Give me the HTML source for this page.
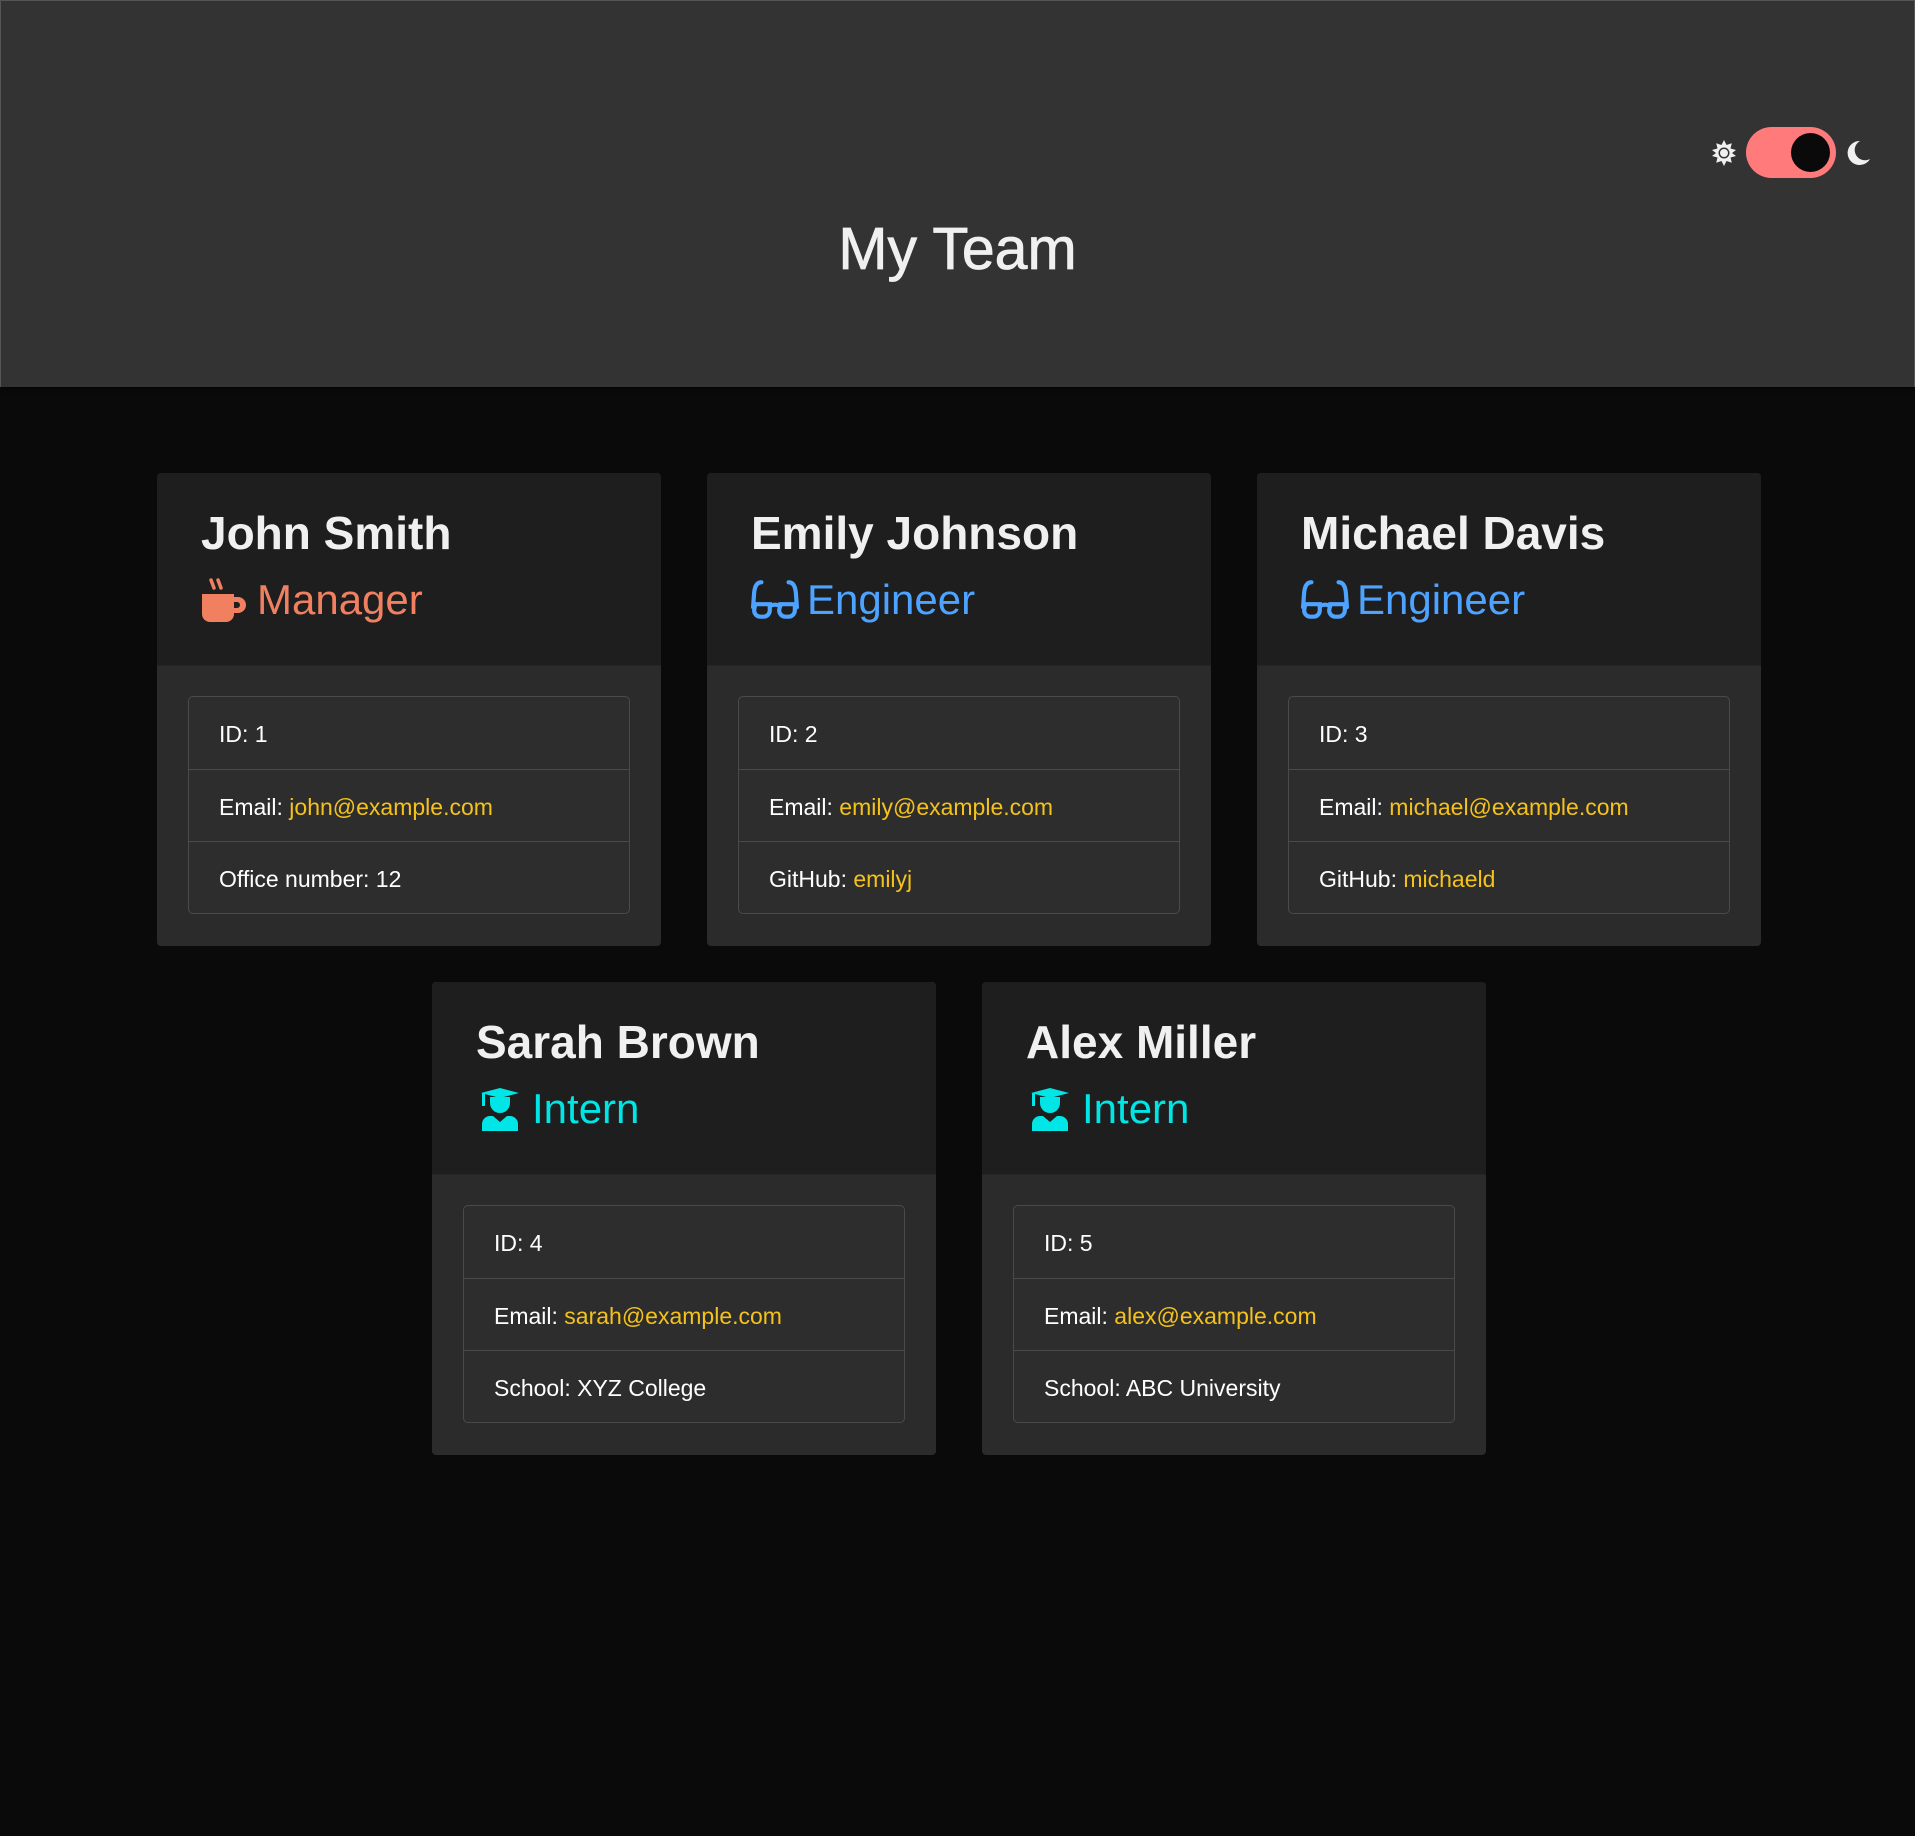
<!DOCTYPE html>
<html><head><meta charset="utf-8"><style>
*{box-sizing:border-box;margin:0;padding:0}
body{width:1915px;height:1836px;background:#0a0a0a;font-family:"Liberation Sans",sans-serif;position:relative;overflow:hidden}
.hdr{position:absolute;left:0;top:0;width:1915px;height:387px;background:#333;border:1px solid #555;border-bottom:none;box-shadow:0 2px 4px rgba(0,0,0,.5)}
.title{position:absolute;left:0;width:1915px;top:214px;text-align:center;color:#f0f0f0;font-size:59px;line-height:70px;-webkit-text-stroke:0.8px #f0f0f0}
.card{position:absolute;width:504px;height:473px;background:#2b2b2b;border-radius:4px;overflow:hidden}
.ch{height:193px;background:#1e1e1e;padding:0 0 0 44px;border-bottom:1px solid #262626}
.name{position:absolute;left:44px;top:32px;color:#f0f0f0;font-size:46px;font-weight:bold;line-height:56px}
.role{position:absolute;left:44px;top:102px;font-size:42px;line-height:50px;display:flex;align-items:center;gap:8px}
.role svg{width:48px;height:44px}
.list{position:absolute;left:31px;top:223px;width:442px;height:218px;border:1px solid #4a4a4a;border-radius:5px;background:#2d2d2d}
.li{height:72.5px;border-bottom:1px solid #4a4a4a;color:#fff;font-size:23px;padding-left:30px;line-height:74px}
.li:last-child{border-bottom:none}
.y{color:#f5c21b}
</style></head><body>
<div class="hdr"></div>
<div class="title">My Team</div>
<svg style="position:absolute;left:1710px;top:139px" width="28" height="28" viewBox="0 0 28 28"><polygon fill="#f0f0f0" points="14,1 16.5,6 21.8,4.2 20.5,9.5 26,11 22,14 26,17 20.5,18.5 21.8,23.8 16.5,22 14,27 11.5,22 6.2,23.8 7.5,18.5 2,17 6,14 2,11 7.5,9.5 6.2,4.2 11.5,6"/><circle cx="14" cy="14" r="5.5" fill="#333"/><circle cx="14" cy="14" r="4" fill="#f0f0f0"/></svg>
<div style="position:absolute;left:1746px;top:127px;width:90px;height:51px;border-radius:26px;background:#ff7b7b"></div>
<div style="position:absolute;left:1791px;top:133px;width:39px;height:39px;border-radius:50%;background:#0a0a0a"></div>
<svg style="position:absolute;left:1845px;top:140px" width="26" height="26" viewBox="0 0 26 26"><path d="M15 1 A12 12 0 1 0 25 19 A9 9 0 1 1 15 1Z" fill="#f0f0f0"/></svg>

<div class="card" style="left:157px;top:473px"><div class="ch"></div>
<div class="name">John Smith</div>
<div class="role" style="color:#f08060"><svg viewBox="0 0 46 44"><path d="M9 2 l3 8 M16 2 l3 8" stroke="#f08060" stroke-width="3.5" stroke-linecap="round"/><path d="M0 16 h32 v20 a8 8 0 0 1-8 8 h-16 a8 8 0 0 1-8-8z" fill="#f08060"/><path d="M32 19 h4 a8 8 0 0 1 0 16 h-4 v-5 h3 a3 3 0 0 0 0-6 h-3z" fill="#f08060"/></svg>Manager</div>
<div class="list"><div class="li">ID: 1</div><div class="li">Email: <span class="y">john@example.com</span></div><div class="li">Office number: 12</div></div></div>

<div class="card" style="left:707px;top:473px"><div class="ch"></div>
<div class="name">Emily Johnson</div>
<div class="role" style="color:#4da3ff"><svg viewBox="0 0 46 42"><g fill="none" stroke="#4da3ff" stroke-width="4" stroke-linecap="round"><path d="M10 4 Q4 4 3 14 L2 28"/><path d="M36 4 Q42 4 43 14 L44 28"/><path d="M4 25 h14 v6 a6 6 0 0 1-6 6 h-3 a6 6 0 0 1-6-6z"/><path d="M28 25 h14 v6 a6 6 0 0 1-6 6 h-3 a6 6 0 0 1-6-6z"/><path d="M18 27 q5-3 10 0"/></g></svg>Engineer</div>
<div class="list"><div class="li">ID: 2</div><div class="li">Email: <span class="y">emily@example.com</span></div><div class="li">GitHub: <span class="y">emilyj</span></div></div></div>

<div class="card" style="left:1257px;top:473px"><div class="ch"></div>
<div class="name">Michael Davis</div>
<div class="role" style="color:#4da3ff"><svg viewBox="0 0 46 42"><g fill="none" stroke="#4da3ff" stroke-width="4" stroke-linecap="round"><path d="M10 4 Q4 4 3 14 L2 28"/><path d="M36 4 Q42 4 43 14 L44 28"/><path d="M4 25 h14 v6 a6 6 0 0 1-6 6 h-3 a6 6 0 0 1-6-6z"/><path d="M28 25 h14 v6 a6 6 0 0 1-6 6 h-3 a6 6 0 0 1-6-6z"/><path d="M18 27 q5-3 10 0"/></g></svg>Engineer</div>
<div class="list"><div class="li">ID: 3</div><div class="li">Email: <span class="y">michael@example.com</span></div><div class="li">GitHub: <span class="y">michaeld</span></div></div></div>

<div class="card" style="left:432px;top:982px"><div class="ch"></div>
<div class="name">Sarah Brown</div>
<div class="role" style="color:#00e5e5"><svg viewBox="0 0 40 44"><g fill="#00e5e5"><path d="M1 6 L20 1 L39 6 L20 11z"/><rect x="2" y="6" width="3" height="13"/><path d="M10 10 h20 v6 a10 10 0 0 1-20 0z"/><path d="M2 44 v-7 a8 8 0 0 1 8-8 h3 l7 6 l7-6 h3 a8 8 0 0 1 8 8 v7z"/></g></svg>Intern</div>
<div class="list"><div class="li">ID: 4</div><div class="li">Email: <span class="y">sarah@example.com</span></div><div class="li">School: XYZ College</div></div></div>

<div class="card" style="left:982px;top:982px"><div class="ch"></div>
<div class="name">Alex Miller</div>
<div class="role" style="color:#00e5e5"><svg viewBox="0 0 40 44"><g fill="#00e5e5"><path d="M1 6 L20 1 L39 6 L20 11z"/><rect x="2" y="6" width="3" height="13"/><path d="M10 10 h20 v6 a10 10 0 0 1-20 0z"/><path d="M2 44 v-7 a8 8 0 0 1 8-8 h3 l7 6 l7-6 h3 a8 8 0 0 1 8 8 v7z"/></g></svg>Intern</div>
<div class="list"><div class="li">ID: 5</div><div class="li">Email: <span class="y">alex@example.com</span></div><div class="li">School: ABC University</div></div></div>
</body></html>
